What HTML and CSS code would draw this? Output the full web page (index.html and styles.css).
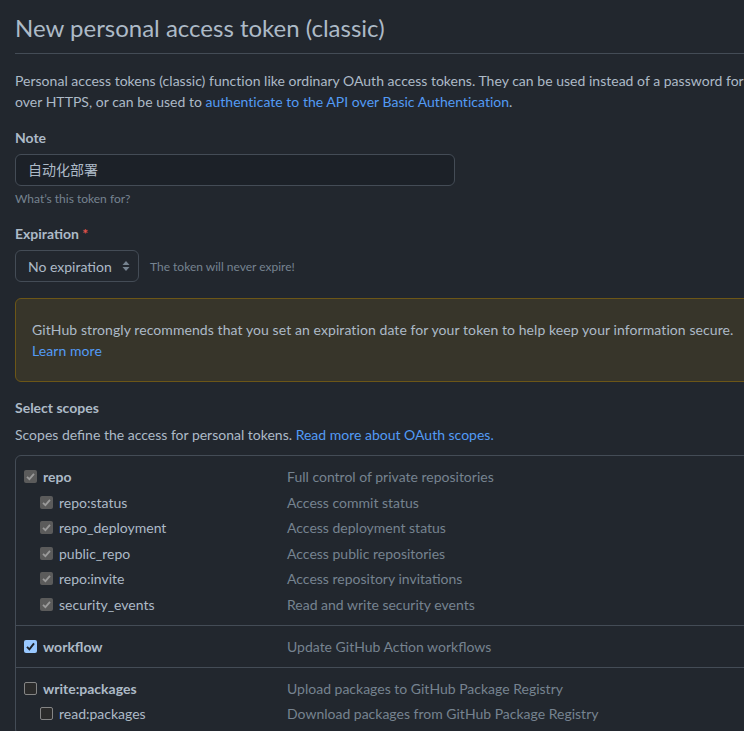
FILE: index.html
```html
<!DOCTYPE html>
<html lang="en">
<head>
<meta charset="utf-8">
<title>New personal access token (classic)</title>
<link rel="stylesheet" href="styles.css">
</head>
<body>
<main class="page">
  <h1 class="title">New personal access token (classic)</h1>
  <p class="intro">Personal access tokens (classic) function like ordinary OAuth access tokens. They can be used instead of a password for<br>over HTTPS, or can be used to <a href="#">authenticate to the API over Basic Authentication</a>.</p>

  <div class="field">
    <label class="label">Note</label>
    <div class="input">自动化部署</div>
    <div class="note">What’s this token for?</div>
  </div>

  <div class="field">
    <label class="label">Expiration <span class="req">*</span></label>
    <div class="select-row">
      <div class="select">No expiration
        <svg class="arrows" width="8" height="12" viewBox="0 0 8 12"><path d="M4 1 L7.5 5 H0.5 Z" fill="#768390"/><path d="M4 11 L7.5 7 H0.5 Z" fill="#768390"/></svg>
      </div>
      <span class="note-inline">The token will never expire!</span>
    </div>
  </div>

  <div class="warning">
    GitHub strongly recommends that you set an expiration date for your token to help keep your information secure.<br>
    <a href="#">Learn more</a>
  </div>

  <div class="scopes-head">
    <div class="label">Select scopes</div>
    <p class="scopes-desc">Scopes define the access for personal tokens. <a href="#">Read more about OAuth scopes.</a></p>
  </div>

  <div class="scopes">
    <div class="group">
      <div class="row top"><span class="cb disabled"><svg viewBox="0 0 13 13"><path d="M3 6.8 L5.4 9.2 L10 3.9" fill="none" stroke="#9a9a9a" stroke-width="1.8"/></svg></span><span class="name">repo</span><span class="desc">Full control of private repositories</span></div>
      <div class="row sub"><span class="cb disabled"><svg viewBox="0 0 13 13"><path d="M3 6.8 L5.4 9.2 L10 3.9" fill="none" stroke="#9a9a9a" stroke-width="1.8"/></svg></span><span class="name">repo:status</span><span class="desc">Access commit status</span></div>
      <div class="row sub"><span class="cb disabled"><svg viewBox="0 0 13 13"><path d="M3 6.8 L5.4 9.2 L10 3.9" fill="none" stroke="#9a9a9a" stroke-width="1.8"/></svg></span><span class="name">repo_deployment</span><span class="desc">Access deployment status</span></div>
      <div class="row sub"><span class="cb disabled"><svg viewBox="0 0 13 13"><path d="M3 6.8 L5.4 9.2 L10 3.9" fill="none" stroke="#9a9a9a" stroke-width="1.8"/></svg></span><span class="name">public_repo</span><span class="desc">Access public repositories</span></div>
      <div class="row sub"><span class="cb disabled"><svg viewBox="0 0 13 13"><path d="M3 6.8 L5.4 9.2 L10 3.9" fill="none" stroke="#9a9a9a" stroke-width="1.8"/></svg></span><span class="name">repo:invite</span><span class="desc">Access repository invitations</span></div>
      <div class="row sub"><span class="cb disabled"><svg viewBox="0 0 13 13"><path d="M3 6.8 L5.4 9.2 L10 3.9" fill="none" stroke="#9a9a9a" stroke-width="1.8"/></svg></span><span class="name">security_events</span><span class="desc">Read and write security events</span></div>
    </div>
    <div class="group">
      <div class="row top"><span class="cb checked"><svg viewBox="0 0 13 13"><path d="M3 6.8 L5.4 9.4 L10 3.4" fill="none" stroke="#1c2128" stroke-width="1.9"/></svg></span><span class="name">workflow</span><span class="desc">Update GitHub Action workflows</span></div>
    </div>
    <div class="group">
      <div class="row top"><span class="cb empty"></span><span class="name">write:packages</span><span class="desc">Upload packages to GitHub Package Registry</span></div>
      <div class="row sub"><span class="cb empty"></span><span class="name">read:packages</span><span class="desc">Download packages from GitHub Package Registry</span></div>
    </div>
  </div>
</main>
</body>
</html>
```

FILE: styles.css
```css
html, body {
  margin: 0;
  padding: 0;
  background: #22272e;
  overflow: hidden;
}
body {
  color: #adbac7;
  font-family: Lato, "Noto Sans CJK SC", sans-serif;
  font-size: 14px;
  line-height: 21px;
}
a {
  color: #539bf5;
  text-decoration: none;
}
.page {
  width: 1000px;
  padding: 10px 0 0 15px;
}
.title {
  margin: 0;
  font-size: 24px;
  font-weight: 400;
  line-height: 36px;
  padding-bottom: 7px;
  border-bottom: 1px solid #444c56;
  color: #adbac7;
}
.intro {
  margin: 16px 0 0;
  white-space: nowrap;
  letter-spacing: 0.02px;
}
.field {
  margin-top: 15px;
}
.label {
  display: block;
  font-weight: 700;
  line-height: 21px;
}
.req {
  color: #e5534b;
}
.input {
  margin-top: 6px;
  height: 30px;
  border: 1px solid #444c56;
  border-radius: 6px;
  background: #1c2128;
  padding: 0 12px;
  box-sizing: content-box;
  width: 414px;
  line-height: 30px;
  color: #adbac7;
}
.note {
  margin-top: 4px;
  font-size: 12px;
  line-height: 18px;
  color: #768390;
}
.select-row {
  margin-top: 6px;
  display: flex;
  align-items: center;
  gap: 11px;
}
.select {
  display: flex;
  align-items: center;
  justify-content: space-between;
  width: 102px;
  height: 30px;
  padding: 0 8px 0 12px;
  border: 1px solid #444c56;
  border-radius: 6px;
  background: #22272e;
  color: #adbac7;
}
.arrows {
  display: block;
}
.note-inline {
  font-size: 12px;
  color: #768390;
}
.warning {
  margin-top: 16px;
  padding: 20px 16px;
  border: 1px solid #6c5617;
  border-radius: 6px;
  background: #37352a;
  color: #adbac7;
  letter-spacing: 0.08px;
}
.scopes-head {
  margin-top: 15px;
}
.scopes-desc {
  margin: 6px 0 0;
}
.scopes {
  margin-top: 10px;
  border: 1px solid #444c56;
  border-radius: 6px;
}
.group {
  padding: 8px 0 7.5px;
  border-top: 1px solid #444c56;
}
.group:first-child {
  border-top: 0;
}
.row {
  display: grid;
  grid-template-columns: 13px 223px 1fr;
  align-items: center;
  column-gap: 6px;
  height: 25.5px;
  padding-left: 8px;
}
.row.sub {
  padding-left: 24px;
  grid-template-columns: 13px 207px 1fr;
}
.row.top .name {
  font-weight: 700;
}
.desc {
  color: #768390;
  padding-left: 15px;
}
.cb {
  width: 13px;
  height: 13px;
  box-sizing: border-box;
  border-radius: 2px;
  display: block;
}
.cb svg {
  display: block;
  width: 13px;
  height: 13px;
}
.cb.disabled {
  background: #5b5b5b;
}
.cb.checked {
  background: #99c8ff;
}
.cb.empty {
  background: #2b2b2b;
  border: 1px solid #858585;
}
```
